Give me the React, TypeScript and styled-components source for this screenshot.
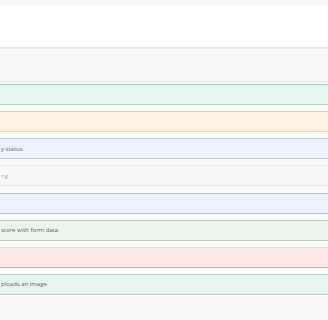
import React from "react";
import styled, { createGlobalStyle } from "styled-components";

type Tone = "green" | "orange" | "blue" | "gray" | "indigo" | "sage" | "pink" | "mint";

interface ToneStyle {
  bg: string;
  top: string;
  bottom: string;
}

const tones: Record<Tone, ToneStyle> = {
  green: { bg: "#e6f5ed", top: "#9edcbf", bottom: "#a6dec4" },
  orange: { bg: "#fcf1e2", top: "#f5c9a4", bottom: "#f3d5a8" },
  blue: { bg: "#eaf3fc", top: "#b7d2ee", bottom: "#b3d3ec" },
  gray: { bg: "#f7f7f7", top: "#f0f0f0", bottom: "#eeeeee" },
  indigo: { bg: "#ebf2fb", top: "#b8c6ea", bottom: "#b5c3e6" },
  sage: { bg: "#e9f5ec", top: "#bdd1c3", bottom: "#c2c9c2" },
  pink: { bg: "#fce8e7", top: "#e3d9cc", bottom: "#d1b2a9" },
  mint: { bg: "#e5f5ee", top: "#b6d9c8", bottom: "#b2d6c5" },
};

const GlobalStyle = createGlobalStyle`
  html, body {
    margin: 0;
    padding: 0;
    background: #fafafa;
  }
  body {
    font-family: "Open Sans", "DejaVu Sans", sans-serif;
    overflow: hidden;
  }
`;

const Page = styled.div`
  width: 328px;
  height: 320px;
  display: flex;
  flex-direction: column;
  background: #fafafa;
`;

const TopStrip = styled.div`
  height: 5px;
  background: #f7f7f7;
`;

const Header = styled.header`
  height: 42px;
  background: #ffffff;
  border-bottom: 2px solid #ebebeb;
`;

const Toolbar = styled.div`
  height: 31px;
  background: #f9f9f9;
  border-top: 1px solid #fdfdfd;
  border-bottom: 1px solid #e6e6e6;
`;

const List = styled.ul`
  list-style: none;
  margin: 0;
  padding: 2px 0 0;
  display: flex;
  flex-direction: column;
  gap: 6.15px;
`;

const Row = styled.li<{ $tone: Tone }>`
  height: 19px;
  display: flex;
  align-items: center;
  padding: 0 0 0 1px;
  background: ${(p) => tones[p.$tone].bg};
  border-top: 1px solid ${(p) => tones[p.$tone].top};
  border-bottom: 1px solid ${(p) => tones[p.$tone].bottom};
  font-size: 6px;
  color: #666666;
  white-space: nowrap;
  overflow: hidden;
`;

const Label = styled.span<{ $faint?: boolean }>`
  color: ${(p) => (p.$faint ? "#b5b5b5" : "#666666")};
`;

const rows: { tone: Tone; text: string; faint?: boolean }[] = [
  { tone: "green", text: "" },
  { tone: "orange", text: "" },
  { tone: "blue", text: "y status" },
  { tone: "gray", text: "ng", faint: true },
  { tone: "indigo", text: "" },
  { tone: "sage", text: "store with form data" },
  { tone: "pink", text: "" },
  { tone: "mint", text: "ploads an image" },
];

export default function App() {
  return (
    <Page>
      <GlobalStyle />
      <TopStrip />
      <Header />
      <Toolbar />
      <List>
        {rows.map((r, i) => (
          <Row key={i} $tone={r.tone}>
            <Label $faint={r.faint}>{r.text}</Label>
          </Row>
        ))}
      </List>
    </Page>
  );
}
